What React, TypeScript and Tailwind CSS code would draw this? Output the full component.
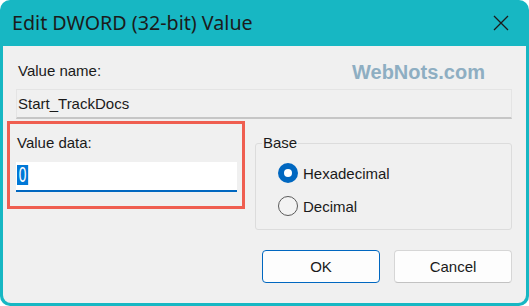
export default function App() {
  return (
    <div className="h-[306px] w-[529px] bg-white font-['Liberation_Sans',Arial,sans-serif] text-[15px] leading-[17px] text-[#1a1a1a]">
      <div className="flex h-[306px] w-[529px] flex-col rounded-[10px] bg-[#17b7c3] px-[3px] pb-[3px]">
        <div className="flex h-[46px] shrink-0 items-center justify-between pl-[9px] pr-[17px]">
          <span className="font-['Noto_Sans',sans-serif] text-[19.7px] leading-[24px] text-[#1b1b1b]">
            Edit DWORD (32-bit) Value
          </span>
          <svg width="16" height="16" viewBox="0 0 16 16" fill="none">
            <path d="M1 1L15 15M15 1L1 15" stroke="#1b1b1b" strokeWidth="1.3" />
          </svg>
        </div>
        <div className="flex flex-1 flex-col rounded-b-[8px] bg-[#f0f0f0] pl-[13px] pr-[14px]">
          <div className="flex h-[43px] items-start justify-between pt-[16px]">
            <span className="pl-[2px]">Value name:</span>
            <span className="mr-[27px] mt-[-1px] text-[20px] font-bold leading-[23px] text-[#8eaec2]">
              WebNots.com
            </span>
          </div>
          <div className="flex h-[30px] items-center border border-b-[2px] border-[#e4e4e4] border-b-[#c6c6c6] bg-[#f0f0f0] pl-[1px]">
            Start_TrackDocs
          </div>
          <div className="mt-[2px] flex items-start">
            <div className="ml-[-9px] h-[88px] w-[238px] border-[3px] border-[#ef5e50] pl-[6px] pt-[10px]">
              <div className="pl-[1px]">Value data:</div>
              <div className="mt-[11px] flex h-[30px] w-[221px] items-start border-b-[2px] border-[#0067c0] bg-white pl-[1px] pt-[3px]">
                <span className="inline-flex h-[20px] w-[18px] origin-left scale-x-[0.62] items-center justify-center bg-[#0078d7] text-[22px] leading-none text-white">
                  0
                </span>
              </div>
            </div>
            <div className="relative ml-[10px] mt-[22px] h-[87px] w-[257px] rounded-[3px] border border-[#dcdcdc] pl-[22px] pt-[19px]">
              <span className="absolute left-[6px] top-[-10px] bg-[#f0f0f0] px-[1px]">Base</span>
              <div className="flex flex-col gap-[13px]">
                <div className="flex h-[20px] items-center gap-[5px]">
                  <span className="flex h-[20px] w-[20px] items-center justify-center rounded-full bg-[#0067c0]">
                    <span className="h-[8px] w-[8px] rounded-full bg-white" />
                  </span>
                  <span>Hexadecimal</span>
                </div>
                <div className="flex h-[20px] items-center gap-[5px]">
                  <span className="h-[20px] w-[20px] rounded-full border border-[#5a5a5a] bg-[#f3f3f3]" />
                  <span>Decimal</span>
                </div>
              </div>
            </div>
          </div>
          <div className="mt-[20px] flex justify-end gap-[14px]">
            <button className="h-[33px] w-[118px] rounded-[4px] border border-[#0067c0] bg-[#fdfdfd] text-[15px] text-[#1a1a1a]">
              OK
            </button>
            <button className="h-[33px] w-[118px] rounded-[4px] border border-[#d6d6d6] border-b-[#c2c2c2] bg-[#fdfdfd] text-[15px] text-[#1a1a1a]">
              Cancel
            </button>
          </div>
        </div>
      </div>
    </div>
  );
}
